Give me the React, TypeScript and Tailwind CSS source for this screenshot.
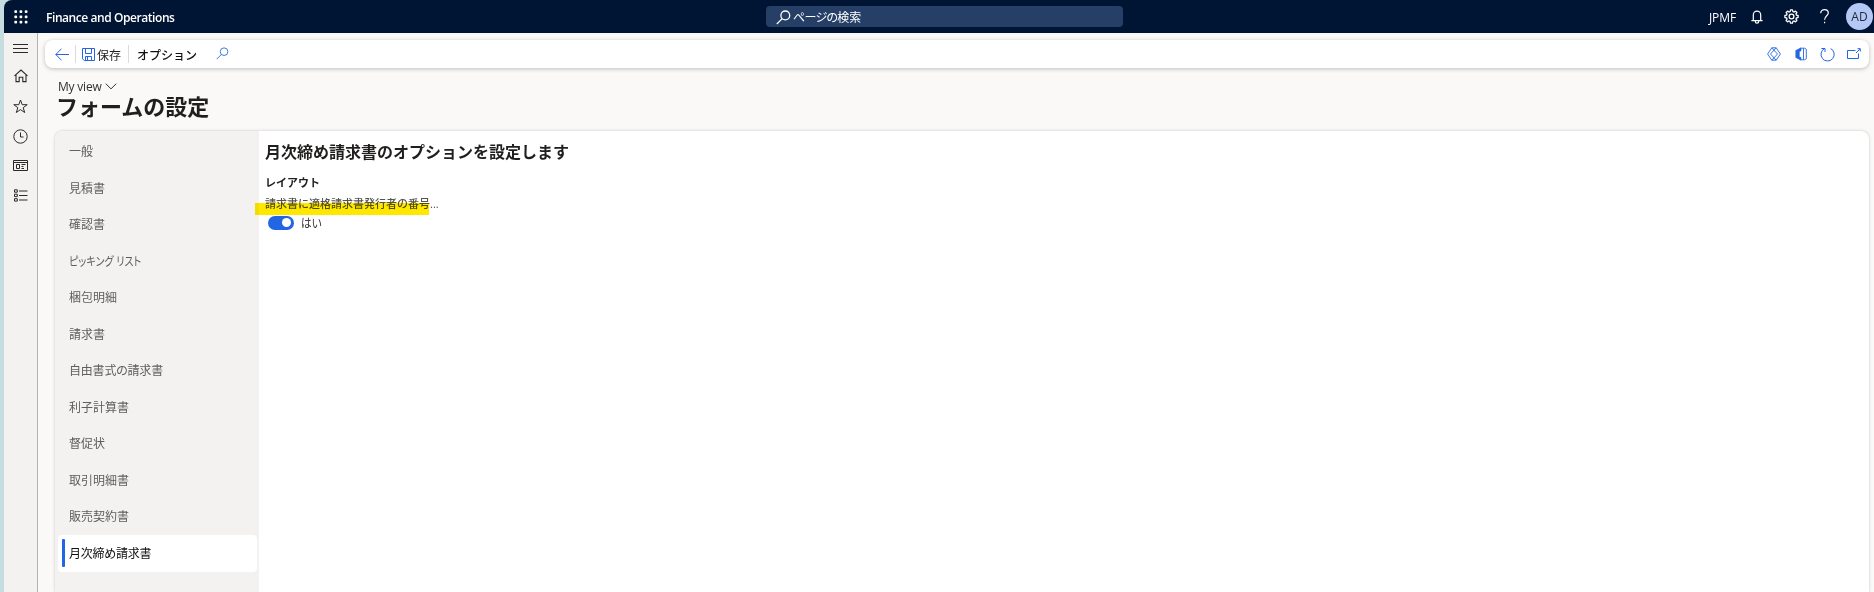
import type { ReactNode } from "react";

const navItems: { label: string; fit: string }[] = [
  { label: "一般", fit: "" },
  { label: "見積書", fit: "" },
  { label: "確認書", fit: "" },
  { label: "ピッキング リスト", fit: "origin-left scale-x-[0.84]" },
  { label: "梱包明細", fit: "" },
  { label: "請求書", fit: "" },
  { label: "自由書式の請求書", fit: "tracking-[-0.2px]" },
  { label: "利子計算書", fit: "" },
  { label: "督促状", fit: "" },
  { label: "取引明細書", fit: "" },
  { label: "販売契約書", fit: "" },
  { label: "月次締め請求書", fit: "tracking-[-0.25px]" },
];

function Icon({ w = 16, h = 16, sw = 1, className = "", children }: { w?: number; h?: number; sw?: number; className?: string; children: ReactNode }) {
  return (
    <svg width={w} height={h} viewBox={`0 0 ${w} ${h}`} fill="none" stroke="currentColor" strokeWidth={sw} className={`block shrink-0 ${className}`}>
      {children}
    </svg>
  );
}

function SearchGlyph({ className = "", sw = 1 }: { className?: string; sw?: number }) {
  return (
    <Icon w={15} h={15} sw={sw} className={className}>
      <circle cx="9.3" cy="5.4" r="4.4" />
      <path d="M6.2 8.6 L0.8 14" />
    </Icon>
  );
}

function Header() {
  return (
    <header className="flex h-[33px] shrink-0 items-center rounded-tl-lg bg-[#001433] text-white">
      <svg width="14" height="14" viewBox="0 0 14 14" fill="currentColor" className="ml-[10px] block shrink-0">
        {[0.3, 5.5, 10.7].map((y) => [0.3, 5.5, 10.7].map((x) => <rect key={`${x}-${y}`} x={x} y={y} width="2.8" height="2.8" rx="1" />))}
      </svg>
      <div className="ml-[18px] w-[720px] pt-[2px] text-[12px] font-semibold tracking-[-0.43px] whitespace-nowrap">Finance and Operations</div>
      <div className="flex h-[21px] w-[357px] items-center rounded-[4px] bg-[#263f66] pl-[10px]">
        <SearchGlyph sw={1.3} className="mt-[2px]" />
        <span className="ml-[2px] pt-[3px] text-[12px] leading-[18px] tracking-[-0.7px]">ページの</span>
        <span className="pt-[3px] text-[12px] leading-[18px]">検索</span>
      </div>
      <div className="ml-auto flex items-center">
        <span className="w-[28px] pt-[2px] text-[12px] tracking-[-0.1px] whitespace-nowrap">JPMF</span>
        <Icon w={12} h={14} sw={1.2} className="ml-[14px]">
          <path d="M2.3 10.4V5A3.7 3.9 0 0 1 9.7 5V10.4M0.4 10.6H11.6M4.3 11V11.6A1.7 1.6 0 0 0 7.7 11.6V11" />
        </Icon>
        <Icon w={15} h={15} sw={1.3} className="ml-[21px]">
          <circle cx="7.5" cy="7.5" r="2.4" />
          <path d="M6.2 2.5L6.5 0.9H8.5L8.8 2.5L10.1 3.05L11.45 2.15L12.85 3.55L11.95 4.9L12.5 6.2L14.1 6.5V8.5L12.5 8.8L11.95 10.1L12.85 11.45L11.45 12.85L10.1 11.95L8.8 12.5L8.5 14.1H6.5L6.2 12.5L4.9 11.95L3.55 12.85L2.15 11.45L3.05 10.1L2.5 8.8L0.9 8.5V6.5L2.5 6.2L3.05 4.9L2.15 3.55L3.55 2.15L4.9 3.05Z" strokeLinejoin="round" />
        </Icon>
        <Icon w={9} h={15} sw={1.2} className="ml-[21px]">
          <path d="M0.7 4.2C0.7 1.9 2.3 0.7 4.5 0.7S8.3 1.9 8.3 3.9C8.3 6.6 4.6 7 4.6 10.8" />
          <path d="M4.6 12.8v1.5" />
        </Icon>
        <div className="ml-[17px] mr-[1px] flex size-[27px] items-center justify-center rounded-full bg-[#b4c8f5] pt-[1px] text-[12px] text-[#242b38]">AD</div>
      </div>
    </header>
  );
}

function Rail() {
  return (
    <nav className="flex w-[34px] shrink-0 flex-col items-center border-r border-[#b5b3b1] bg-[#f3f2f1] text-[#2b2a29]">
      <Icon w={15} h={11} className="mt-[10px]">
        <path d="M0 1.5h15M0 5.5h15M0 9.5h15" />
      </Icon>
      <Icon w={14} h={14} sw={1.1} className="mt-[15px]">
        <path d="M0.5 6.9L7 1l6.5 5.9M2 5.7V12.6H5.2V8.3H8.8V12.6H12V5.7" />
      </Icon>
      <Icon w={15} h={15} className="mt-[16px]">
        <path d="M7.5 1L9.2 5.7H14.2L10.2 8.7L11.7 13.5L7.5 10.6L3.3 13.5L4.8 8.7L0.8 5.7H5.8Z" />
      </Icon>
      <Icon w={15} h={15} className="mt-[15px]">
        <circle cx="7.5" cy="7.5" r="6.7" />
        <path d="M7.5 3.5V8H10.5" />
      </Icon>
      <Icon w={15} h={13} className="mt-[15px]">
        <path d="M0.5 1.5H14.5V11.5H0.5ZM0.5 3.5H14.5M3.5 5.5H6.5V9.5H3.5ZM8.5 5.5H12.5M8.5 7.5H10.5M8.5 9.5H11" />
      </Icon>
      <Icon w={14} h={13} className="mt-[17px]">
        <path d="M0.5 0.8H3.3V3.2H0.5ZM0.5 5.2H3.3V7.6H0.5ZM0.5 9.7H3.3V12.1H0.5ZM5 2H13.5M5 6.5H13.5M5 11H13.5" />
      </Icon>
    </nav>
  );
}

function Toolbar() {
  return (
    <div className="mt-[7px] mr-[5px] ml-[7px] flex h-[28px] shrink-0 items-center rounded-lg bg-white shadow-[0_1px_4px_rgba(0,0,0,0.24)]">
      <Icon w={14} h={13} className="ml-[10px] text-[#2266e3]">
        <path d="M6.5 0.7L0.8 6.5L6.5 12.3M0.8 6.5H14" />
      </Icon>
      <div className="ml-[6px] h-[18px] w-px bg-[#dddbd9]" />
      <Icon w={13} h={13} className="ml-[6px] text-[#2266e3]">
        <path d="M0.5 0.5H12.5V12.5H2.2L0.5 10.8ZM3.5 0.5V5.5H9.5V0.5M3.5 12.4V8.5H9.5V12.4M5.5 9V12" />
      </Icon>
      <span className="ml-[2px] w-[24px] pt-[4px] text-[12px] leading-[16px] whitespace-nowrap text-[#201f1e]">保存</span>
      <div className="ml-[7px] h-[18px] w-px bg-[#dddbd9]" />
      <span className="ml-[8px] w-[60px] pt-[4px] text-[12px] leading-[16px] font-medium whitespace-nowrap text-[#11100f] [font-feature-settings:'palt'_0]">オプション</span>
      <SearchGlyph className="ml-[19px] -mt-[1px] size-[13px] text-[#2266e3]" />
      <div className="ml-auto mr-[8px] flex items-center text-[#2266e3]">
        <Icon w={14} h={14}>
          <path d="M4.8 0.8H9.2L13.4 7L9.2 13.2H4.8L0.6 7ZM4.8 0.8L10.5 7L4.8 13.2M9.2 0.8L3.5 7L9.2 13.2" strokeWidth="0.9" strokeLinejoin="round" />
        </Icon>
        <Icon w={12} h={14} className="ml-[14px]">
          <path d="M0.8 3.5L6 0.8V3.8L4.3 4.5V10L6 10.5V13.2L0.8 10.5Z" fill="currentColor" strokeWidth="0.6" />
          <path d="M6 1.2H9.5L11.3 2.2V11.8L9.5 12.8H6M8.5 1.2V12.8" strokeWidth="0.9" />
        </Icon>
        <Icon w={15} h={15} className="ml-[13px]">
          <path d="M10.6 1.5A6.6 6.6 0 1 1 4.6 1.5M1.4 1.5H5V5" />
        </Icon>
        <Icon w={14} h={12} className="ml-[12px]">
          <path d="M8.5 2.5H0.5V10.5H11.500V5.500M9 5L13 1M10.5 0.7H13.3V3.5" />
        </Icon>
      </div>
    </div>
  );
}

function Sidebar() {
  return (
    <aside className="flex w-[204px] shrink-0 flex-col bg-[#f3f2f1] pt-[2.5px] pr-[2px] pl-[3px]">
      {navItems.map((item, i) => {
        const active = i === navItems.length - 1;
        return (
          <div key={item.label} className={`flex h-[36.5px] w-[199px] shrink-0 items-center rounded-[4px] ${active ? "bg-white text-[#11100f]" : "text-[#605e5c]"}`}>
            <div className={`ml-[4px] h-[28px] w-[3px] rounded-[1px] ${active ? "bg-[#2266e3]" : ""}`} />
            <span className={`ml-[4px] pt-[1px] text-[12px] leading-[20px] whitespace-nowrap ${item.fit}`}>{item.label}</span>
          </div>
        );
      })}
    </aside>
  );
}

function Content() {
  return (
    <section className="flex grow flex-col items-start pl-[6px]">
      <h2 className="mt-[9px] text-[16px] leading-[24px] font-bold whitespace-nowrap text-[#201f1e] [font-feature-settings:'palt'_0]">月次締め請求書のオプションを設定します</h2>
      <h3 className="mt-[11px] text-[11px] leading-[16px] font-bold whitespace-nowrap text-[#201f1e] [font-feature-settings:'palt'_0]">レイアウト</h3>
      <div className="relative mt-[5px] text-[11px] leading-[16px] font-medium whitespace-nowrap text-[#555351] [font-feature-settings:'palt'_0]">
        <span>請求書に適格請求書発行者の番号...</span>
        <div className="absolute top-[7px] -left-[10px] h-[12px] w-[174px] bg-[#ffe800] mix-blend-multiply" />
      </div>
      <div className="mt-[1px] ml-[3px] flex items-center">
        <div className="flex h-[14px] w-[26px] items-center justify-end rounded-full bg-[#2266e3] pr-[3px]">
          <div className="size-[9px] rounded-full bg-white" />
        </div>
        <span className="ml-[7px] origin-left scale-x-[0.88] pt-[3px] text-[12px] leading-[16px] text-[#323130]">はい</span>
      </div>
    </section>
  );
}

export default function App() {
  return (
    <div className="flex h-[592px] w-[1874px] overflow-hidden bg-[#c5dde1] pl-[4px] font-['Open_Sans','Noto_Sans_CJK_JP',sans-serif] [font-feature-settings:'palt']">
      <div className="flex grow flex-col">
        <Header />
        <div className="flex min-h-0 grow">
          <Rail />
          <main className="flex min-w-0 grow flex-col bg-[#faf9f8]">
            <Toolbar />
            <div className="mt-[11px] ml-[20px] flex h-[16px] items-center text-[12px] text-[#323130]">
              <span className="tracking-[-0.2px]">My view</span>
              <Icon w={12} h={7} className="-mt-[2px] ml-[3px]">
                <path d="M0.8 0.7L6 5.9L11.2 0.7" />
              </Icon>
            </div>
            <h1 className="ml-[18px] h-[25px] text-[22px] leading-[22px] font-bold whitespace-nowrap text-[#201f1e] [font-feature-settings:'palt'_0]">フォームの設定</h1>
            <div className="mt-[11px] mr-[5px] ml-[17px] flex min-h-0 grow overflow-hidden rounded-t-lg bg-white shadow-[0_0_3px_rgba(0,0,0,0.22)]">
              <Sidebar />
              <Content />
            </div>
          </main>
        </div>
      </div>
    </div>
  );
}
